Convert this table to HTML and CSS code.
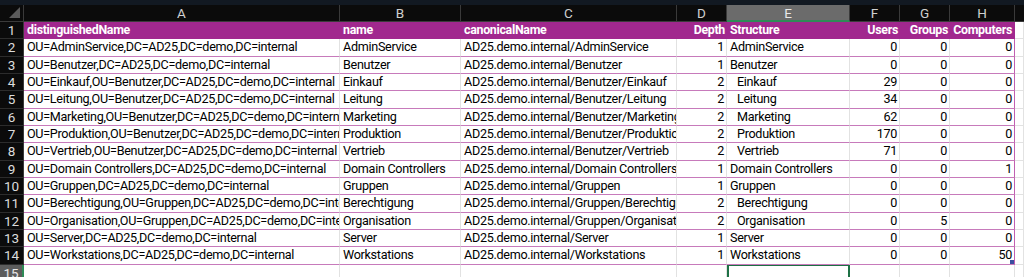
FILE: index.html
```html
<!DOCTYPE html>
<html>
<head>
<meta charset="utf-8">
<link rel="stylesheet" href="styles.css">
</head>
<body>
<div class="topbar"></div>
<div class="sheet">
  <div class="corner"><span class="tri"></span></div>
  <div class="ch">A</div><div class="ch">B</div><div class="ch">C</div><div class="ch">D</div><div class="ch sel">E</div><div class="ch">F</div><div class="ch">G</div><div class="ch">H</div><div class="ch last"></div>

  <div class="rh">1</div>
  <div class="th">distinguishedName</div><div class="th">name</div><div class="th">canonicalName</div><div class="th r">Depth</div><div class="th">Structure</div><div class="th r">Users</div><div class="th r">Groups</div><div class="th r endc">Computers</div><div class="c blank"></div>

  <div class="rh">2</div>
  <div class="c">OU=AdminService,DC=AD25,DC=demo,DC=internal</div><div class="c">AdminService</div><div class="c">AD25.demo.internal/AdminService</div><div class="c r">1</div><div class="c">AdminService</div><div class="c r">0</div><div class="c r">0</div><div class="c r endc">0</div><div class="c blank"></div>

  <div class="rh">3</div>
  <div class="c">OU=Benutzer,DC=AD25,DC=demo,DC=internal</div><div class="c">Benutzer</div><div class="c">AD25.demo.internal/Benutzer</div><div class="c r">1</div><div class="c">Benutzer</div><div class="c r">0</div><div class="c r">0</div><div class="c r endc">0</div><div class="c blank"></div>

  <div class="rh">4</div>
  <div class="c">OU=Einkauf,OU=Benutzer,DC=AD25,DC=demo,DC=internal</div><div class="c">Einkauf</div><div class="c">AD25.demo.internal/Benutzer/Einkauf</div><div class="c r">2</div><div class="c ind">Einkauf</div><div class="c r">29</div><div class="c r">0</div><div class="c r endc">0</div><div class="c blank"></div>

  <div class="rh">5</div>
  <div class="c">OU=Leitung,OU=Benutzer,DC=AD25,DC=demo,DC=internal</div><div class="c">Leitung</div><div class="c">AD25.demo.internal/Benutzer/Leitung</div><div class="c r">2</div><div class="c ind">Leitung</div><div class="c r">34</div><div class="c r">0</div><div class="c r endc">0</div><div class="c blank"></div>

  <div class="rh">6</div>
  <div class="c">OU=Marketing,OU=Benutzer,DC=AD25,DC=demo,DC=internal</div><div class="c">Marketing</div><div class="c">AD25.demo.internal/Benutzer/Marketing</div><div class="c r">2</div><div class="c ind">Marketing</div><div class="c r">62</div><div class="c r">0</div><div class="c r endc">0</div><div class="c blank"></div>

  <div class="rh">7</div>
  <div class="c">OU=Produktion,OU=Benutzer,DC=AD25,DC=demo,DC=internal</div><div class="c">Produktion</div><div class="c">AD25.demo.internal/Benutzer/Produktion</div><div class="c r">2</div><div class="c ind">Produktion</div><div class="c r">170</div><div class="c r">0</div><div class="c r endc">0</div><div class="c blank"></div>

  <div class="rh">8</div>
  <div class="c">OU=Vertrieb,OU=Benutzer,DC=AD25,DC=demo,DC=internal</div><div class="c">Vertrieb</div><div class="c">AD25.demo.internal/Benutzer/Vertrieb</div><div class="c r">2</div><div class="c ind">Vertrieb</div><div class="c r">71</div><div class="c r">0</div><div class="c r endc">0</div><div class="c blank"></div>

  <div class="rh">9</div>
  <div class="c">OU=Domain Controllers,DC=AD25,DC=demo,DC=internal</div><div class="c">Domain Controllers</div><div class="c">AD25.demo.internal/Domain Controllers</div><div class="c r">1</div><div class="c">Domain Controllers</div><div class="c r">0</div><div class="c r">0</div><div class="c r endc">1</div><div class="c blank"></div>

  <div class="rh">10</div>
  <div class="c">OU=Gruppen,DC=AD25,DC=demo,DC=internal</div><div class="c">Gruppen</div><div class="c">AD25.demo.internal/Gruppen</div><div class="c r">1</div><div class="c">Gruppen</div><div class="c r">0</div><div class="c r">0</div><div class="c r endc">0</div><div class="c blank"></div>

  <div class="rh">11</div>
  <div class="c">OU=Berechtigung,OU=Gruppen,DC=AD25,DC=demo,DC=internal</div><div class="c">Berechtigung</div><div class="c">AD25.demo.internal/Gruppen/Berechtigung</div><div class="c r">2</div><div class="c ind">Berechtigung</div><div class="c r">0</div><div class="c r">0</div><div class="c r endc">0</div><div class="c blank"></div>

  <div class="rh">12</div>
  <div class="c">OU=Organisation,OU=Gruppen,DC=AD25,DC=demo,DC=internal</div><div class="c">Organisation</div><div class="c">AD25.demo.internal/Gruppen/Organisation</div><div class="c r">2</div><div class="c ind">Organisation</div><div class="c r">0</div><div class="c r">5</div><div class="c r endc">0</div><div class="c blank"></div>

  <div class="rh">13</div>
  <div class="c">OU=Server,DC=AD25,DC=demo,DC=internal</div><div class="c">Server</div><div class="c">AD25.demo.internal/Server</div><div class="c r">1</div><div class="c">Server</div><div class="c r">0</div><div class="c r">0</div><div class="c r endc">0</div><div class="c blank"></div>

  <div class="rh">14</div>
  <div class="c">OU=Workstations,DC=AD25,DC=demo,DC=internal</div><div class="c">Workstations</div><div class="c">AD25.demo.internal/Workstations</div><div class="c r">1</div><div class="c">Workstations</div><div class="c r">0</div><div class="c r">0</div><div class="c r endc lastc">50<span class="handle"></span></div><div class="c blank"></div>

  <div class="rh sel">15</div>
  <div class="e"></div><div class="e"></div><div class="e"></div><div class="e"></div><div class="e active"></div><div class="e"></div><div class="e"></div><div class="e"></div><div class="e"></div>
</div>
</body>
</html>
```
FILE: styles.css
```css
html, body {
  margin: 0;
  padding: 0;
  background: #ffffff;
  overflow: hidden;
}
body {
  font-family: Roboto, "Liberation Sans", Arial, sans-serif;
  font-size: 12.6px;
  letter-spacing: -0.3px;
  color: #000;
}
.topbar {
  height: 5px;
  background: #121922;
}
.sheet {
  display: grid;
  grid-template-columns: 24px 316px 121px 216px 50px 123px 50px 50px 65px 1fr;
  grid-template-rows: 17px repeat(15, 17.35px);
}
.sheet > div {
  box-sizing: border-box;
  overflow: hidden;
  white-space: nowrap;
  line-height: 16px;
  position: relative;
}
.corner {
  background: #0b0b0b;
  border-right: 1px solid #3a3a3a;
  border-bottom: 1px solid #3a3a3a;
}
.tri {
  position: absolute;
  right: 3px;
  bottom: 3px;
  width: 0;
  height: 0;
  border-left: 11px solid transparent;
  border-bottom: 11px solid #5b5b5b;
}
.ch {
  background: #0b0b0b;
  color: #cfcfcf;
  text-align: center;
  font-size: 13.5px;
  letter-spacing: 0;
  border-right: 1px solid #3a3a3a;
  border-bottom: 1px solid #3a3a3a;
}
.ch.sel {
  background: #6b6b6b;
  color: #e8e8e8;
  border-bottom: 2px solid #2e8b57;
}
.ch.last { border-right: none; }
.rh {
  background: #0b0b0b;
  color: #dcdcdc;
  text-align: center;
  font-size: 13.5px;
  letter-spacing: 0;
  border-right: 1px solid #3a3a3a;
  border-bottom: 1px solid #2c2c2c;
}
.rh.sel {
  background: #5c5c5c;
  color: #e6e6e6;
  border-right: 2px solid #2e8b57;
}
.th {
  background: #a1288e;
  color: #ffffff;
  font-weight: bold;
  font-size: 12.4px;
  letter-spacing: -0.3px;
  padding: 0 2px 0 3px;
  border-bottom: 1px solid #a1288e;
}
.th.endc { border-right: 1px solid #a1288e; }
.c {
  background: #ffffff;
  padding: 0 2px 0 3px;
  border-right: 1px solid #e2e2e2;
  border-bottom: 1px solid #c77abb;
}
.c.blank {
  border-bottom: 1px solid #e2e2e2;
}
.c.endc { border-right: 1px solid #c060b2; }
.r { text-align: right; }
.ind { padding-left: 10px; }
.e {
  background: #ffffff;
  border-right: 1px solid #e2e2e2;
  border-bottom: 1px solid #e2e2e2;
}
.e.active {
  border: 2px solid #1e7145;
  border-top-width: 1px;
}
.handle {
  position: absolute;
  right: 0;
  bottom: 0;
  width: 4px;
  height: 4px;
  background: #3b4fa0;
}
```
